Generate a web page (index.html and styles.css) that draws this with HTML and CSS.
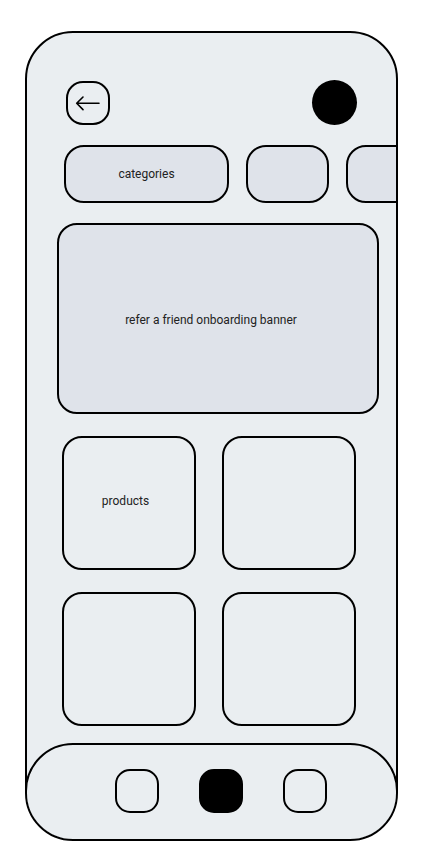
FILE: index.html
```html
<!DOCTYPE html>
<html>
<head>
<meta charset="utf-8">
<link rel="stylesheet" href="styles.css">
</head>
<body>
<div class="phone">
  <div class="header">
    <div class="back">
      <svg width="44" height="44" viewBox="0 0 44 44"><path d="M11 22.3H33M17 16L10.7 22.3L17 28.6" fill="none" stroke="#000" stroke-width="1.6" stroke-linecap="round" stroke-linejoin="round"/></svg>
    </div>
    <div class="avatar"></div>
  </div>
  <div class="pills">
    <div class="pill pill-wide">categories</div>
    <div class="pill"></div>
    <div class="pill"></div>
  </div>
  <div class="banner"><span>refer a friend onboarding banner</span></div>
  <div class="grid">
    <div class="card">products</div>
    <div class="card"></div>
    <div class="card"></div>
    <div class="card"></div>
  </div>
  <div class="spacer"></div>
  <div class="nav">
    <div class="nav-btn"></div>
    <div class="nav-btn active"></div>
    <div class="nav-btn"></div>
  </div>
</div>
</body>
</html>
```
FILE: styles.css
```css
* { box-sizing: border-box; }
html, body { margin: 0; padding: 0; background: #fff; }
body {
  font-family: Roboto, "Liberation Sans", sans-serif;
  color: #222;
  font-size: 12px;
  padding: 31px 0 0 25px;
}
.phone {
  width: 373px;
  height: 810px;
  border: 2px solid #000;
  border-radius: 48px;
  background: #eaeef1;
  overflow: hidden;
  display: flex;
  flex-direction: column;
}
.header {
  display: flex;
  justify-content: space-between;
  align-items: center;
  padding: 47px 39px 0 39px;
  height: 92px;
  flex-shrink: 0;
}
.back {
  width: 44px;
  height: 44px;
  border: 2px solid #000;
  border-radius: 17px;
  display: flex;
  align-items: center;
  justify-content: center;
}
.back svg { display: block; flex-shrink: 0; }
.avatar {
  width: 45px;
  height: 45px;
  border-radius: 50%;
  background: #000;
}
.pills {
  display: flex;
  gap: 17px;
  margin-top: 20px;
  padding-left: 37px;
  flex-shrink: 0;
}
.pill {
  flex: 0 0 83px;
  height: 58px;
  border: 2px solid #000;
  border-radius: 20px;
  background: #dfe3ea;
  display: flex;
  align-items: center;
  justify-content: center;
}
.pill-wide { flex-basis: 165px; }
.banner {
  margin: 20px 0 0 30px;
  width: 322px;
  height: 191px;
  border: 2px solid #000;
  border-radius: 20px;
  background: #dfe3ea;
  display: flex;
  align-items: center;
  justify-content: center;
  padding-right: 14px;
  padding-top: 3px;
  flex-shrink: 0;
}
.grid {
  display: grid;
  grid-template-columns: 134px 134px;
  grid-auto-rows: 134px;
  column-gap: 26px;
  row-gap: 22px;
  margin: 22px 0 0 35px;
  flex-shrink: 0;
}
.card {
  border: 2px solid #000;
  border-radius: 20px;
  display: flex;
  align-items: center;
  justify-content: center;
  padding-right: 7px;
  padding-bottom: 4px;
}
.spacer { flex: 1; }
.nav {
  flex-shrink: 0;
  height: 98px;
  margin: 0 -2px -2px -2px;
  border: 2px solid #000;
  border-radius: 48px;
  background: #eaeef1;
  display: flex;
  align-items: center;
  justify-content: center;
  gap: 40px;
  padding-left: 19px;
  padding-bottom: 2px;
}
.nav-btn {
  width: 44px;
  height: 44px;
  border: 2px solid #000;
  border-radius: 15px;
}
.nav-btn.active { background: #000; }
```
